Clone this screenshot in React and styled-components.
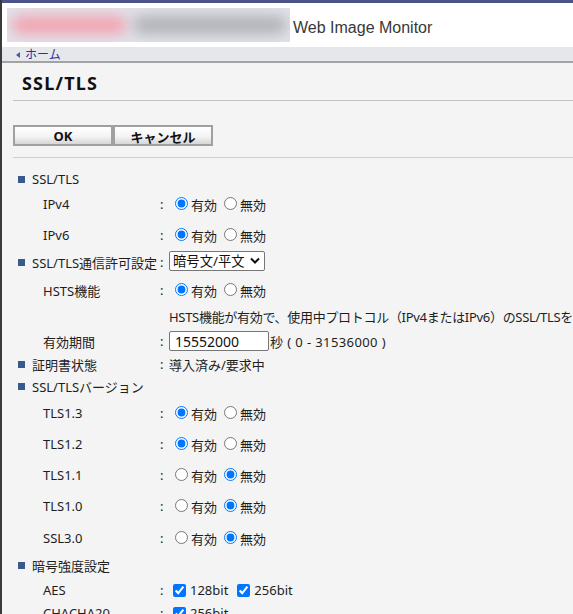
import styled, { createGlobalStyle } from "styled-components";

const GlobalStyle = createGlobalStyle`
  html, body {
    margin: 0;
    padding: 0;
    overflow: hidden;
    background: #f4f4f4;
  }
  body {
    font-family: "Noto Sans", "Noto Sans CJK JP", sans-serif;
    font-size: 13px;
    color: #1e1e1e;
  }
`;

//Outer
const Page = styled.div`
  min-height: 100vh;
  border-left: 2px solid #3a3a3a;
  background: #f4f4f4;
`;

//Header
const Header = styled.header`
  height: 44px;
  border-top: 3px solid #4b5488;
  background: #fff;
  display: flex;
  align-items: center;
  padding-left: 5px;
`;
const LogoBox = styled.div`
  width: 283px;
  height: 34px;
  background: #e2e2ea;
  position: relative;
  overflow: hidden;
  flex-shrink: 0;
`;
const LogoBlob = styled.div`
  position: absolute;
  top: 8px;
  left: ${(p) => p.$left}px;
  width: ${(p) => p.$width}px;
  height: 18px;
  border-radius: 9px;
  background: ${(p) => p.$color};
  filter: blur(7px);
`;
const AppName = styled.span`
  margin-left: 3px;
  padding-top: 6px;
  font-family: "Liberation Sans", Arial, sans-serif;
  font-size: 16px;
  color: #383838;
`;

//Nav
const NavBar = styled.nav`
  height: 14px;
  background: #e6e7eb;
  border-bottom: 2px solid #a3a3a3;
  display: flex;
  align-items: center;
  padding-left: 14px;
  font-size: 12px;
  line-height: 14px;
`;
const BackArrow = styled.span`
  width: 0;
  height: 0;
  border-top: 3px solid transparent;
  border-bottom: 3px solid transparent;
  border-right: 4px solid #4a5a9a;
  margin-right: 5px;
  margin-top: 2px;
`;
const HomeLink = styled.a`
  color: #2f2f9f;
  text-decoration: none;
  padding-top: 2px;
`;

//Content
const Content = styled.main`
  padding-left: 11px;
`;
const TitleBar = styled.div`
  height: 34px;
  padding: 3px 0 0 9px;
  display: flex;
  align-items: center;
  border-bottom: 1px solid #c2c2c2;
`;
const PageTitle = styled.h1`
  margin: 0;
  font-size: 18px;
  font-weight: 700;
  letter-spacing: 1.2px;
  color: #111;
`;
const ButtonBar = styled.div`
  display: flex;
  padding: 24px 0 11px;
  border-bottom: 1px solid #cfcfcf;
`;
const Button = styled.button`
  width: 100px;
  height: 21px;
  margin: 0;
  padding: 0;
  border: 2px solid #a0a0a0;
  background: linear-gradient(#ffffff 0%, #f4f4f4 55%, #d6d6d6 100%);
  font-family: "Noto Sans", "Noto Sans CJK JP", sans-serif;
  font-size: 13px;
  font-weight: 700;
  color: #111;
`;

//Form rows
const Form = styled.div`
  padding-top: 10px;
`;
const Row = styled.div`
  display: flex;
  height: 22px;
  margin-top: ${(p) => p.$gap || 0}px;
  white-space: nowrap;
`;
const Label = styled.div`
  width: ${(p) => (p.$sub ? 115 : 140)}px;
  padding-left: ${(p) => (p.$sub ? 30 : 5)}px;
  display: flex;
  align-items: center;
  gap: 7px;
  flex-shrink: 0;
`;
const Bullet = styled.span`
  width: 7px;
  height: 7px;
  background: #3b5a8c;
  flex-shrink: 0;
`;
const Colon = styled.div`
  width: 9px;
  padding-left: 2px;
  display: flex;
  align-items: center;
  flex-shrink: 0;
`;
const Value = styled.div`
  display: flex;
  align-items: center;
  letter-spacing: ${(p) => p.$tight ? "-0.3px" : "normal"};
`;
const Choice = styled.label`
  display: flex;
  align-items: center;
  margin-right: ${(p) => p.$space || 1}px;
`;
const Radio = styled.input.attrs({ type: "radio" })`
  width: 13px;
  height: 13px;
  margin: 0 3px 2px 6px;
`;
const Check = styled.input.attrs({ type: "checkbox" })`
  width: 13px;
  height: 13px;
  margin: 0 4px 0 4px;
`;
const SelectWrap = styled.div`
  position: relative;
  display: flex;
`;
const Select = styled.select`
  appearance: none;
  width: 96px;
  height: 20px;
  padding: 0 0 0 3px;
  border: 1px solid #767676;
  border-radius: 2px;
  background: #fff;
  font-family: "Noto Sans", "Noto Sans CJK JP", sans-serif;
  font-size: 13.33px;
  color: #111;
`;
const Chevron = styled.svg`
  position: absolute;
  right: 5px;
  top: 6px;
  pointer-events: none;
`;
const TextInput = styled.input`
  box-sizing: border-box;
  width: 100px;
  height: 20px;
  margin: 0;
  padding: 0 5px;
  border: 1px solid #767676;
  border-radius: 2px;
  background: #fff;
  font-family: "Noto Sans", sans-serif;
  font-size: 14px;
  color: #111;
`;
const Unit = styled.span`
  margin-left: 1px;
  letter-spacing: 0.4px;
`;

const OnOff = ({ name, on }) => (
  <Value>
    <Choice>
      <Radio name={name} defaultChecked={on} />
      有効
    </Choice>
    <Choice>
      <Radio name={name} defaultChecked={!on} />
      無効
    </Choice>
  </Value>
);

const Field = ({ label, sub, gap, colon = true, children }) => (
  <Row $gap={gap}>
    <Label $sub={sub}>
      {!sub && label !== undefined && <Bullet />}
      {label}
    </Label>
    <Colon>{colon ? ":" : ""}</Colon>
    {children}
  </Row>
);

const Section = ({ label, gap }) => (
  <Row $gap={gap}>
    <Label>
      <Bullet />
      {label}
    </Label>
  </Row>
);

const versions = [
  { name: "TLS1.3", on: true, gap: 5 },
  { name: "TLS1.2", on: true, gap: 9 },
  { name: "TLS1.1", on: false, gap: 9 },
  { name: "TLS1.0", on: false, gap: 9 },
  { name: "SSL3.0", on: false, gap: 10 },
];

const App = () => {
  return (
    <>
      <GlobalStyle />
      <Page>
        <Header>
          <LogoBox>
            <LogoBlob $left={4} $width={116} $color="#f2a2ae" />
            <LogoBlob $left={126} $width={154} $color="#b0b0b6" />
          </LogoBox>
          <AppName>Web Image Monitor</AppName>
        </Header>
        <NavBar>
          <BackArrow />
          <HomeLink href="#">ホーム</HomeLink>
        </NavBar>
        <Content>
          <TitleBar>
            <PageTitle>SSL/TLS</PageTitle>
          </TitleBar>
          <ButtonBar>
            <Button>OK</Button>
            <Button>キャンセル</Button>
          </ButtonBar>
          <Form>
            <Section label="SSL/TLS" />
            <Field sub label="IPv4" gap={3}>
              <OnOff name="ipv4" on />
            </Field>
            <Field sub label="IPv6" gap={9}>
              <OnOff name="ipv6" on />
            </Field>
            <Field label="SSL/TLS通信許可設定" gap={5}>
              <SelectWrap>
                <Select defaultValue="both">
                  <option value="both">暗号文/平文</option>
                  <option value="cipher">暗号文のみ</option>
                </Select>
                <Chevron width="10" height="8" viewBox="0 0 10 8">
                  <path d="M1 1.5 L5 5.5 L9 1.5" fill="none" stroke="#111" strokeWidth="2" />
                </Chevron>
              </SelectWrap>
            </Field>
            <Field sub label="HSTS機能" gap={6}>
              <OnOff name="hsts" on />
            </Field>
            <Field sub colon={false} gap={4}>
              <Value $tight>
                HSTS機能が有効で、使用中プロトコル（IPv4またはIPv6）のSSL/TLSを無効にするとHSTS機能は動作しません。
              </Value>
            </Field>
            <Field sub label="有効期間" gap={3}>
              <Value>
                <TextInput defaultValue="15552000" />
                <Unit>秒 ( 0 - 31536000 )</Unit>
              </Value>
            </Field>
            <Field label="証明書状態" gap={1}>
              <Value>導入済み/要求中</Value>
            </Field>
            <Section label="SSL/TLSバージョン" />
            {versions.map((v) => (
              <Field sub key={v.name} label={v.name} gap={v.gap}>
                <OnOff name={v.name} on={v.on} />
              </Field>
            ))}
            <Section label="暗号強度設定" gap={5} />
            <Field sub label="AES" gap={3}>
              <Value>
                <Choice $space={5}>
                  <Check defaultChecked />
                  128bit
                </Choice>
                <Choice>
                  <Check defaultChecked />
                  256bit
                </Choice>
              </Value>
            </Field>
            <Field sub label="CHACHA20" gap={1}>
              <Value>
                <Choice>
                  <Check defaultChecked />
                  256bit
                </Choice>
              </Value>
            </Field>
          </Form>
        </Content>
      </Page>
    </>
  );
};

export default App;
